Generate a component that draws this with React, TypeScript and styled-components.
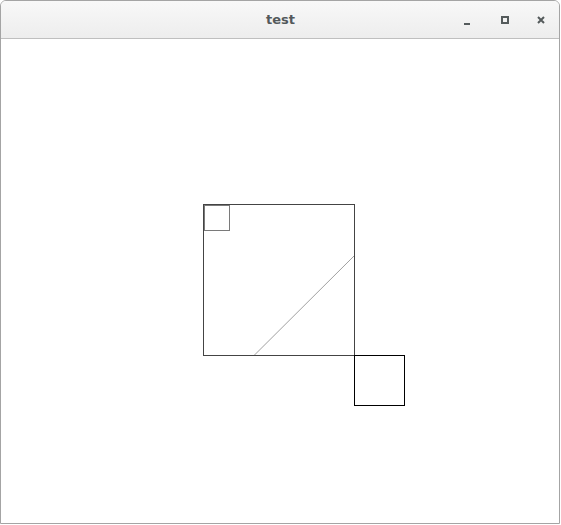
import React from 'react';
import styled, { createGlobalStyle } from 'styled-components';

const GlobalStyle = createGlobalStyle`
  html, body {
    margin: 0;
    padding: 0;
    background: #ffffff;
  }
`;

const Window = styled.div`
  width: 558px;
  height: 522px;
  border: 1px solid #a4a4a4;
  border-radius: 6px 6px 0 0;
  display: flex;
  flex-direction: column;
  overflow: hidden;
  background: #ffffff;
`;

const TitleBar = styled.header`
  height: 37px;
  flex-shrink: 0;
  border-bottom: 1px solid #bfbfbf;
  background: linear-gradient(#f8f8f8, #ededed);
  display: flex;
  align-items: center;
  justify-content: center;
  position: relative;
`;

const Title = styled.span`
  font-family: 'DejaVu Sans', 'Noto Sans', sans-serif;
  font-weight: bold;
  font-size: 13px;
  color: #53595b;
  margin-left: 1px;
`;

// window controls sit over the right end of the title bar
const Controls = styled.div`
  position: absolute;
  right: 1px;
  top: 0;
  height: 100%;
  display: flex;
  align-items: center;
`;

const ControlButton = styled.button`
  width: 37px;
  height: 37px;
  border: none;
  background: transparent;
  padding: 0;
  display: flex;
  align-items: center;
  justify-content: center;
  color: #555b5c;
`;

const Canvas = styled.main`
  flex-grow: 1;
  background: #ffffff;
  display: flex;
`;

const Drawing = styled.svg`
  display: block;
  width: 558px;
  height: 484px;
`;

const MinimizeIcon = () => (
  <svg width="8" height="8" viewBox="0 0 8 8">
    <rect x="1" y="5" width="6" height="2" fill="currentColor" />
  </svg>
);

const MaximizeIcon = () => (
  <svg width="8" height="8" viewBox="0 0 8 8">
    <rect x="1" y="1" width="6" height="6" fill="none" stroke="currentColor" strokeWidth="2" />
  </svg>
);

const CloseIcon = () => (
  <svg width="8" height="8" viewBox="0 0 8 8">
    <path d="M1 1 L7 7 M7 1 L1 7" stroke="currentColor" strokeWidth="2" />
  </svg>
);

const App: React.FC = () => {
  return (
    <>
      <GlobalStyle />
      <Window>
        <TitleBar>
          <Title>test</Title>
          <Controls>
            <ControlButton title="Minimize" style={{ marginRight: 1, paddingTop: 4 }}>
              <MinimizeIcon />
            </ControlButton>
            <ControlButton title="Maximize">
              <MaximizeIcon />
            </ControlButton>
            <ControlButton title="Close" style={{ width: 35 }}>
              <CloseIcon />
            </ControlButton>
          </Controls>
        </TitleBar>
        <Canvas>
          {/* viewBox uses page coordinates of the screenshot */}
          <Drawing viewBox="1 39 558 484">
            <rect x="203.5" y="204.5" width="151" height="151" fill="none" stroke="#444" strokeWidth="1" />
            <rect x="204.5" y="205.5" width="25" height="25" fill="none" stroke="#7a7a7a" strokeWidth="1" />
            <line x1="254.5" y1="355" x2="354" y2="256" stroke="#777" strokeWidth="0.7" />
            <rect x="354.5" y="355.5" width="50" height="50" fill="none" stroke="#000" strokeWidth="1" />
          </Drawing>
        </Canvas>
      </Window>
    </>
  );
};

export default App;
